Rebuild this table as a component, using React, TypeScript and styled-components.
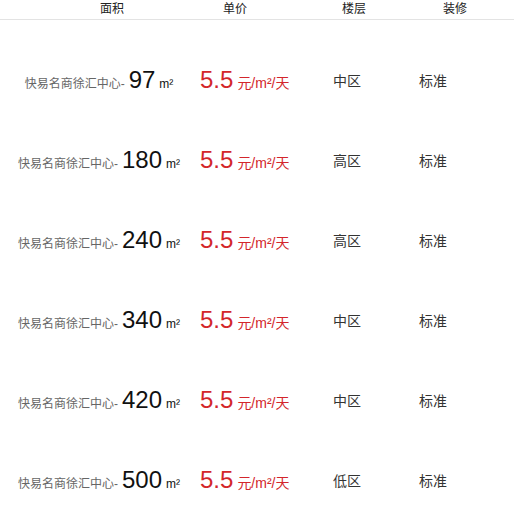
import React from "react";
import styled, { createGlobalStyle } from "styled-components";

const Global = createGlobalStyle`
  html, body { margin: 0; padding: 0; background: #fff; }
  body { font-family: "Liberation Sans", Arial, "Noto Sans CJK SC", sans-serif; }
`;

const Page = styled.div`
  width: 514px;
`;

const Header = styled.div`
  display: grid;
  grid-template-columns: 120px 126px 112px 90px;
  padding-left: 52px;
  height: 19px;
  border-bottom: 1px solid #e3e3e3;
  font-size: 12px;
  line-height: 19px;
  color: #222;
`;

const HeadCell = styled.div`
  text-align: center;
`;

const List = styled.div`
  padding-top: 20px;
`;

const Row = styled.div`
  display: grid;
  grid-template-columns: 198px 100px 98px 74px;
  height: 80px;
  align-items: center;
`;

const AreaCell = styled.div`
  text-align: center;
  white-space: nowrap;
`;

const Name = styled.span`
  font-size: 12px;
  color: #666;
`;

const Big = styled.span<{ $color: string; $size: number }>`
  font-size: ${(p) => p.$size}px;
  color: ${(p) => p.$color};
  margin: 0 4px 0 4px;
`;

const Unit = styled.span<{ $color: string; $size: number }>`
  font-size: ${(p) => p.$size}px;
  color: ${(p) => p.$color};
`;

const PriceCell = styled.div`
  white-space: nowrap;
  margin-left: -2px;
`;

const TextCell = styled.div`
  text-align: center;
  font-size: 14px;
  color: #333;
`;

const rows = [
  { area: "97", floor: "中区" },
  { area: "180", floor: "高区" },
  { area: "240", floor: "高区" },
  { area: "340", floor: "中区" },
  { area: "420", floor: "中区" },
  { area: "500", floor: "低区" },
];

export default function App() {
  return (
    <Page>
      <Global />
      <Header>
        <HeadCell>面积</HeadCell>
        <HeadCell>单价</HeadCell>
        <HeadCell>楼层</HeadCell>
        <HeadCell>装修</HeadCell>
      </Header>
      <List>
        {rows.map((r) => (
          <Row key={r.area}>
            <AreaCell>
              <Name>快易名商徐汇中心-</Name>
              <Big $color="#111" $size={24}>{r.area}</Big>
              <Unit $color="#111" $size={12}>m²</Unit>
            </AreaCell>
            <PriceCell>
              <Big $color="#d3262b" $size={24}>5.5</Big>
              <Unit $color="#d3262b" $size={14}>元/m²/天</Unit>
            </PriceCell>
            <TextCell>{r.floor}</TextCell>
            <TextCell>标准</TextCell>
          </Row>
        ))}
      </List>
    </Page>
  );
}
